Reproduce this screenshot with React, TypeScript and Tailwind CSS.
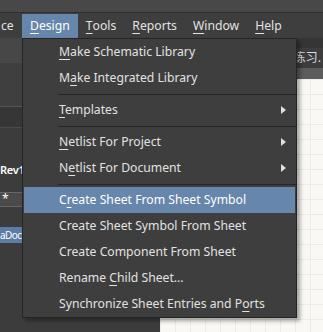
import React from "react";

type Item = { label: string; u: number; arrow?: boolean; active?: boolean } | "sep";

const items: Item[] = [
  { label: "Make Schematic Library", u: 0 },
  { label: "Make Integrated Library", u: 1 },
  "sep",
  { label: "Templates", u: 0, arrow: true },
  "sep",
  { label: "Netlist For Project", u: 0, arrow: true },
  { label: "Netlist For Document", u: 1, arrow: true },
  "sep",
  { label: "Create Sheet From Sheet Symbol", u: 1, active: true },
  { label: "Create Sheet Symbol From Sheet", u: -1 },
  { label: "Create Component From Sheet", u: -1 },
  { label: "Rename Child Sheet...", u: 7 },
  { label: "Synchronize Sheet Entries and Ports", u: 31 },
];

function Label({ text, u }: { text: string; u: number }) {
  if (u < 0) return <>{text}</>;
  return (
    <>
      {text.slice(0, u)}
      <span className="underline underline-offset-[3px] decoration-1">{text[u]}</span>
      {text.slice(u + 1)}
    </>
  );
}

const bar = [
  { label: "Design", u: 0, active: true },
  { label: "Tools", u: 0 },
  { label: "Reports", u: 0 },
  { label: "Window", u: 0 },
  { label: "Help", u: 0 },
];

export default function App() {
  return (
    <div
      className="relative w-[323px] h-[332px] overflow-hidden bg-[#3c3c3c] text-[12.2px] text-[#e2e2e2] flex flex-col"
      style={{ fontFamily: '"Noto Sans", "Noto Sans CJK SC", sans-serif' }}
    >
      {/* top strip */}
      <div className="h-[13px] bg-[#484848] border-b border-[#303030] shrink-0" />
      {/* menubar */}
      <div className="h-[25px] bg-[#3e3e3e] flex items-stretch shrink-0 pt-[1px]">
        <div className="w-[22px] flex items-center pl-[1px] overflow-hidden whitespace-nowrap">ce</div>
        {bar.map((b) => (
          <div
            key={b.label}
            className={`flex items-center px-[8px] ${b.active ? "bg-[#6786ab] text-white" : ""}`}
          >
            <Label text={b.label} u={b.u} />
          </div>
        ))}
      </div>
      {/* body */}
      <div className="flex-1 flex">
        {/* left panel */}
        <div className="w-[160px] flex flex-col text-white">
          <div className="h-[25px] bg-[#474747]" />
          <div className="h-[44px] bg-[#3f3f3f] border-b border-[#555]" />
          <div className="h-[21px] bg-[#363636] border-b border-[#4a4a4a]" />
          <div className="h-[64px] bg-[#3c3c3c] flex items-end pb-[14px] font-semibold whitespace-nowrap text-[11px] tracking-[-0.3px]">
            <span className="w-[22px]">Rev1</span>
          </div>
          <div className="h-[15px] bg-[#4a4a4a] border-y border-[#666] flex items-center pl-[2px] leading-none">*</div>
          <div className="h-[20px]" />
          <div className="h-[16px] bg-[#5b7ca4] flex items-center">
            <div className="w-[22px] whitespace-nowrap text-[10px] tracking-[-0.6px]">aDoc</div>
          </div>
          <div className="flex-1" />
        </div>
        {/* right */}
        <div className="flex-1 flex flex-col">
          <div className="h-[10px] bg-[#353535]" />
          <div className="h-[20px] bg-[#3d3d3d] flex items-center justify-end pr-[2px] whitespace-nowrap overflow-hidden">
            <span className="text-[#dcdcdc]">练习.</span>
          </div>
          <div className="h-[11px] bg-[#5c5c5c]" />
          <div className="flex-1 bg-[#faf8f4] bg-[linear-gradient(#eeebe5_1px,transparent_1px),linear-gradient(90deg,#eeebe5_1px,transparent_1px)] bg-[size:15px_15px]" />
        </div>
      </div>

      {/* dropdown menu */}
      <div className="absolute left-[22px] top-[38px] w-[275px] h-[280px] bg-[#3e3e3e] border border-[#262626] shadow-[3px_3px_4px_rgba(0,0,0,0.35)] flex flex-col">
        {items.map((it, i) =>
          it === "sep" ? (
            <div key={i} className="h-[6px] flex items-center pl-[35px]">
              <div className="h-px w-full bg-[#262626]" />
            </div>
          ) : (
            <div
              key={i}
              className={`h-[26px] mx-[1px] flex items-center pl-[35px] pr-[9px] whitespace-nowrap ${
                it.active ? "bg-[#6786ab] text-white" : ""
              }`}
            >
              <span className="flex-1">
                <Label text={it.label} u={it.u} />
              </span>
              {it.arrow && (
                <svg width="5" height="8" viewBox="0 0 5 8">
                  <path d="M0 0 L5 4 L0 8 Z" fill="#e0e0e0" />
                </svg>
              )}
            </div>
          )
        )}
      </div>
    </div>
  );
}
